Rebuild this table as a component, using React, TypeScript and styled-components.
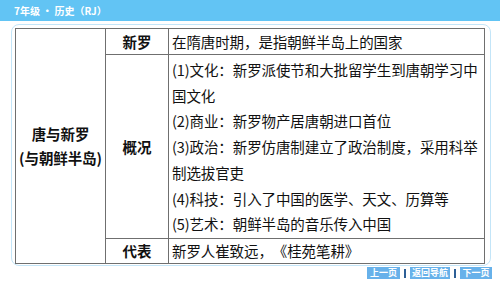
import styled, {createGlobalStyle} from "styled-components";

const GlobalStyle = createGlobalStyle`
  html, body {
    margin: 0;
    padding: 0;
    background: #ffffff;
  }
  body {
    font-family: "Noto Sans CJK SC", "Noto Sans", sans-serif;
  }
`;

const Page = styled.div`
  width: 500px;
  height: 281px;
  overflow: hidden;
  background: #ffffff;
`;

const TopBar = styled.div`
  height: 21px;
  background-color: #62c4f4;
  padding-left: 14px;
  color: #ffffff;
  font-size: 10px;
  font-weight: 700;
  line-height: 21px;
`;

const Card = styled.div`
  margin: 3px 9px 0 11px;
  border: 1px solid #c3e5f8;
  border-radius: 8px;
  padding: 3px 6px 1px 3px;
`;

const Table = styled.table`
  width: 469px;
  border-collapse: collapse;
  table-layout: fixed;
  font-size: 14.5px;
  letter-spacing: -0.1px;
  color: #111111;
  text-spacing-trim: space-all;
`;

const Cell = styled.td<{$bold?: boolean; $center?: boolean; $h: number}>`
  border: 1px solid #6f6f6f;
  height: ${(p) => p.$h}px;
  padding: ${(p) => (p.$center ? "0" : "0 0 0 3px")};
  box-sizing: border-box;
  font-weight: ${(p) => (p.$bold ? 700 : 400)};
  text-align: ${(p) => (p.$center ? "center" : "left")};
  vertical-align: middle;
  line-height: 24px;
`;

const Lines = styled.div`
  line-height: 25.7px;
  padding-top: 1px;
`;

const Nav = styled.div`
  display: flex;
  justify-content: flex-end;
  align-items: center;
  gap: 4px;
  padding-right: 8px;
  margin-top: 1px;
`;

const NavButton = styled.div<{$w: number}>`
  width: ${(p) => p.$w}px;
  height: 12px;
  background-color: #67b1ea;
  color: #ffffff;
  font-size: 9px;
  font-weight: 700;
  line-height: 12px;
  text-align: center;
`;

const Divider = styled.div`
  width: 2px;
  height: 9px;
  background-color: #2d5f96;
`;

const details = [
  "(1)文化：新罗派使节和大批留学生到唐朝学习中国文化",
  "(2)商业：新罗物产居唐朝进口首位",
  "(3)政治：新罗仿唐制建立了政治制度，采用科举制选拔官吏",
  "(4)科技：引入了中国的医学、天文、历算等",
  "(5)艺术：朝鲜半岛的音乐传入中国",
];

const App = () => {
  return (
    <Page>
      <GlobalStyle />
      <TopBar>7年级 · 历史（RJ）</TopBar>
      <Card>
        <Table>
          <colgroup>
            <col style={{width: 90}} />
            <col style={{width: 63}} />
            <col style={{width: 316}} />
          </colgroup>
          <tbody>
            <tr>
              <Cell $bold $center $h={235} rowSpan={3}>
                唐与新罗
                <br />
                (与朝鲜半岛)
              </Cell>
              <Cell $bold $center $h={26}>新罗</Cell>
              <Cell $h={26}>在隋唐时期，是指朝鲜半岛上的国家</Cell>
            </tr>
            <tr>
              <Cell $bold $center $h={184}>概况</Cell>
              <Cell $h={184}>
                <Lines>
                  {details.map((line) => (
                    <div key={line}>{line}</div>
                  ))}
                </Lines>
              </Cell>
            </tr>
            <tr>
              <Cell $bold $center $h={25}>代表</Cell>
              <Cell $h={25}>新罗人崔致远，《桂苑笔耕》</Cell>
            </tr>
          </tbody>
        </Table>
      </Card>
      <Nav>
        <NavButton $w={33}>上一页</NavButton>
        <Divider />
        <NavButton $w={40}>返回导航</NavButton>
        <Divider />
        <NavButton $w={32}>下一页</NavButton>
      </Nav>
    </Page>
  );
};

export default App;
